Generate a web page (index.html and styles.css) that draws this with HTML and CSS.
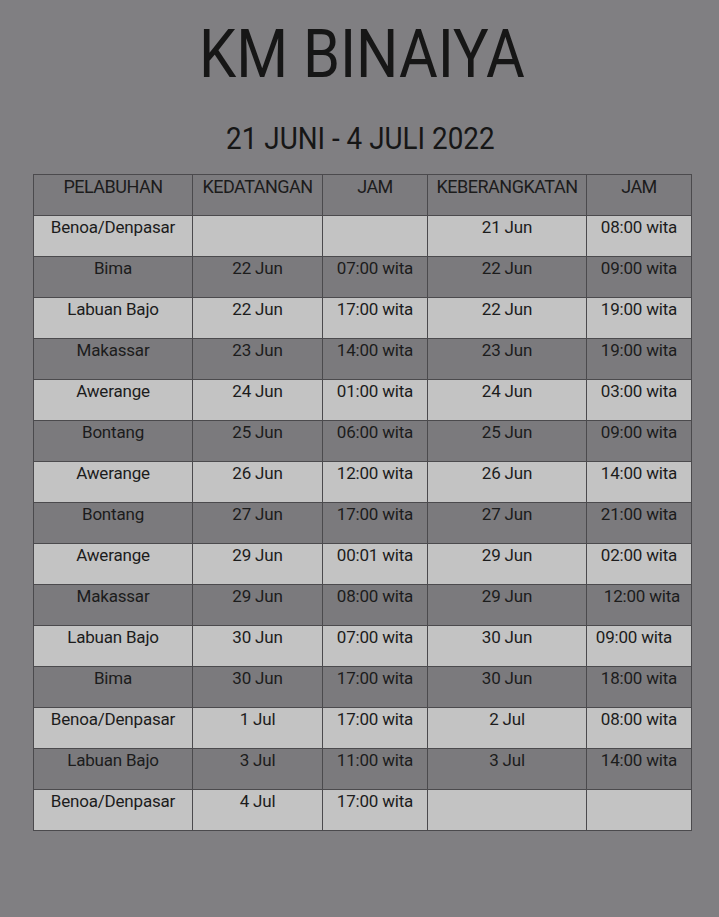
FILE: index.html
```html
<!DOCTYPE html>
<html>
<head>
<meta charset="utf-8">
<link rel="stylesheet" href="styles.css">
</head>
<body>
<div class="page">
  <h1 class="title"><span class="squeeze">KM BINAIYA</span></h1>
  <h2 class="subtitle"><span class="squeeze2">21 JUNI - 4 JULI 2022</span></h2>
  <table class="sched">
    <colgroup>
      <col class="c1"><col class="c2"><col class="c3"><col class="c4"><col class="c5">
    </colgroup>
    <thead>
      <tr><th>PELABUHAN</th><th>KEDATANGAN</th><th>JAM</th><th>KEBERANGKATAN</th><th>JAM</th></tr>
    </thead>
    <tbody>
      <tr class="light"><td>Benoa/Denpasar</td><td></td><td></td><td>21 Jun</td><td>08:00 wita</td></tr>
      <tr class="dark"><td>Bima</td><td>22 Jun</td><td>07:00 wita</td><td>22 Jun</td><td>09:00 wita</td></tr>
      <tr class="light"><td>Labuan Bajo</td><td>22 Jun</td><td>17:00 wita</td><td>22 Jun</td><td>19:00 wita</td></tr>
      <tr class="dark"><td>Makassar</td><td>23 Jun</td><td>14:00 wita</td><td>23 Jun</td><td>19:00 wita</td></tr>
      <tr class="light"><td>Awerange</td><td>24 Jun</td><td>01:00 wita</td><td>24 Jun</td><td>03:00 wita</td></tr>
      <tr class="dark"><td>Bontang</td><td>25 Jun</td><td>06:00 wita</td><td>25 Jun</td><td>09:00 wita</td></tr>
      <tr class="light"><td>Awerange</td><td>26 Jun</td><td>12:00 wita</td><td>26 Jun</td><td>14:00 wita</td></tr>
      <tr class="dark"><td>Bontang</td><td>27 Jun</td><td>17:00 wita</td><td>27 Jun</td><td>21:00 wita</td></tr>
      <tr class="light"><td>Awerange</td><td>29 Jun</td><td>00:01 wita</td><td>29 Jun</td><td>02:00 wita</td></tr>
      <tr class="dark"><td>Makassar</td><td>29 Jun</td><td>08:00 wita</td><td>29 Jun</td><td class="shr">12:00 wita</td></tr>
      <tr class="light"><td>Labuan Bajo</td><td>30 Jun</td><td>07:00 wita</td><td>30 Jun</td><td class="shl">09:00 wita</td></tr>
      <tr class="dark"><td>Bima</td><td>30 Jun</td><td>17:00 wita</td><td>30 Jun</td><td>18:00 wita</td></tr>
      <tr class="light"><td>Benoa/Denpasar</td><td>1 Jul</td><td>17:00 wita</td><td>2 Jul</td><td>08:00 wita</td></tr>
      <tr class="dark"><td>Labuan Bajo</td><td>3 Jul</td><td>11:00 wita</td><td>3 Jul</td><td>14:00 wita</td></tr>
      <tr class="light"><td>Benoa/Denpasar</td><td>4 Jul</td><td>17:00 wita</td><td></td><td></td></tr>
    </tbody>
  </table>
</div>
</body>
</html>
```
FILE: styles.css
```css
html, body {
  margin: 0;
  padding: 0;
  background: #807f82;
}
.page {
  width: 719px;
  height: 917px;
  box-sizing: border-box;
  padding-top: 16px;
  font-family: Roboto, "Liberation Sans", sans-serif;
  color: #161616;
}
.title {
  margin: 0;
  text-align: center;
  font-weight: 400;
  font-size: 66px;
  line-height: 78px;
  padding-left: 4px;
}
.squeeze {
  display: inline-block;
  transform: scaleX(0.9);
}
.subtitle {
  margin: 24px 0 0 0;
  text-align: center;
  font-weight: 400;
  font-size: 32px;
  line-height: 40px;
  padding-left: 2px;
}
.squeeze2 {
  display: inline-block;
  transform: scaleX(0.87);
}
.sched {
  margin: 16px 0 0 33px;
  width: 659px;
  border-collapse: collapse;
  table-layout: fixed;
  font-size: 17px;
  color: #1c1c1c;
}
.c1 { width: 159px; }
.c2 { width: 130px; }
.c3 { width: 105px; }
.c4 { width: 159px; }
.c5 { width: 105px; }
.sched th, .sched td {
  border: 1.5px solid #4b4a4d;
  height: 41px;
  box-sizing: border-box;
  padding: 0;
  vertical-align: top;
  text-align: center;
  font-weight: 400;
  line-height: 22px;
  white-space: nowrap;
  letter-spacing: -0.2px;
}
.sched thead th {
  background: #7c7b7e;
  font-size: 18px;
  letter-spacing: -0.5px;
  padding-top: 1px;
}
.sched tr.light td { background: #c3c3c3; }
.sched tr.dark td { background: #7b7a7d; }
.shr { padding-left: 6px !important; }
.shl { padding-right: 10px !important; }
```
